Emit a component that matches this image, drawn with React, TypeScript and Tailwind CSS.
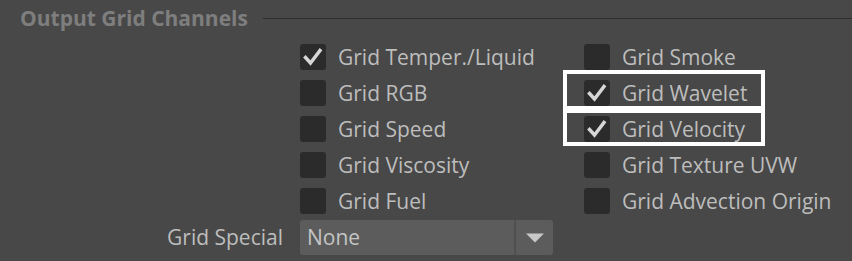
import React from 'react';

interface Channel {
  label: string;
  checked: boolean;
  highlight?: 'first' | 'second';
}

const leftChannels: Channel[] = [
  { label: 'Grid Temper./Liquid', checked: true },
  { label: 'Grid RGB', checked: false },
  { label: 'Grid Speed', checked: false },
  { label: 'Grid Viscosity', checked: false },
  { label: 'Grid Fuel', checked: false },
];

const rightChannels: Channel[] = [
  { label: 'Grid Smoke', checked: false },
  { label: 'Grid Wavelet', checked: true, highlight: 'first' },
  { label: 'Grid Velocity', checked: true, highlight: 'second' },
  { label: 'Grid Texture UVW', checked: false },
  { label: 'Grid Advection Origin', checked: false },
];

const CheckRow: React.FC<{ channel: Channel }> = ({ channel }) => (
  <div className="relative flex items-center h-[36px]">
    {channel.highlight === 'first' && (
      <div className="absolute left-[-21px] top-[-5px] w-[202px] h-[40px] border-[4px] border-white" />
    )}
    {channel.highlight === 'second' && (
      <div className="absolute left-[-21px] top-[-2px] w-[202px] h-[37px] border-[4px] border-white" />
    )}
    <div className="w-[26px] h-[26px] rounded-[3px] bg-[#2b2b2b] flex items-center justify-center shrink-0">
      {channel.checked && (
        <svg width="26" height="26" viewBox="0 0 26 26">
          <path
            d="M5.5 13.5 L10.5 19 L20 6.5"
            fill="none"
            stroke="#d6d6d6"
            strokeWidth="3.4"
            strokeLinecap="square"
          />
        </svg>
      )}
    </div>
    <span className="ml-[12px] text-[21px] leading-none text-[#bdbdbd] whitespace-nowrap">{channel.label}</span>
  </div>
);

export default function App() {
  return (
    <div
      className="w-[852px] h-[261px] bg-[#484848] overflow-hidden"
      style={{ fontFamily: '"Open Sans", "Noto Sans", sans-serif' }}
    >
      {/* section header */}
      <div className="flex items-center h-[39px] pl-[20px] pb-[2px]">
        <span className="text-[21px] leading-none font-bold text-[#7e7e7e] whitespace-nowrap">
          Output Grid Channels
        </span>
        <div className="flex-1 h-px bg-[#2e2e2e] ml-[15px]" />
      </div>

      <div className="flex pl-[300px]">
        <div className="w-[284px]">
          {leftChannels.map((c) => (
            <CheckRow key={c.label} channel={c} />
          ))}
        </div>
        <div>
          {rightChannels.map((c) => (
            <CheckRow key={c.label} channel={c} />
          ))}
        </div>
      </div>

      {/* grid special dropdown */}
      <div className="flex items-center mt-[1px]">
        <span className="w-[283px] text-right text-[21px] leading-none text-[#bdbdbd]">Grid Special</span>
        <div className="ml-[17px] w-[253px] h-[35px] rounded-[3px] bg-[#5c5c5c] flex items-stretch">
          <span className="flex-1 flex items-center pl-[7px] text-[21px] leading-none text-[#c4c4c4]">None</span>
          <div className="w-[2px] bg-[#505050]" />
          <div className="w-[37px] flex items-center justify-center">
            <svg width="18" height="10" viewBox="0 0 18 10">
              <path d="M0 0.5 H18 L9 9.5 Z" fill="#c8c8c8" />
            </svg>
          </div>
        </div>
      </div>
    </div>
  );
}
